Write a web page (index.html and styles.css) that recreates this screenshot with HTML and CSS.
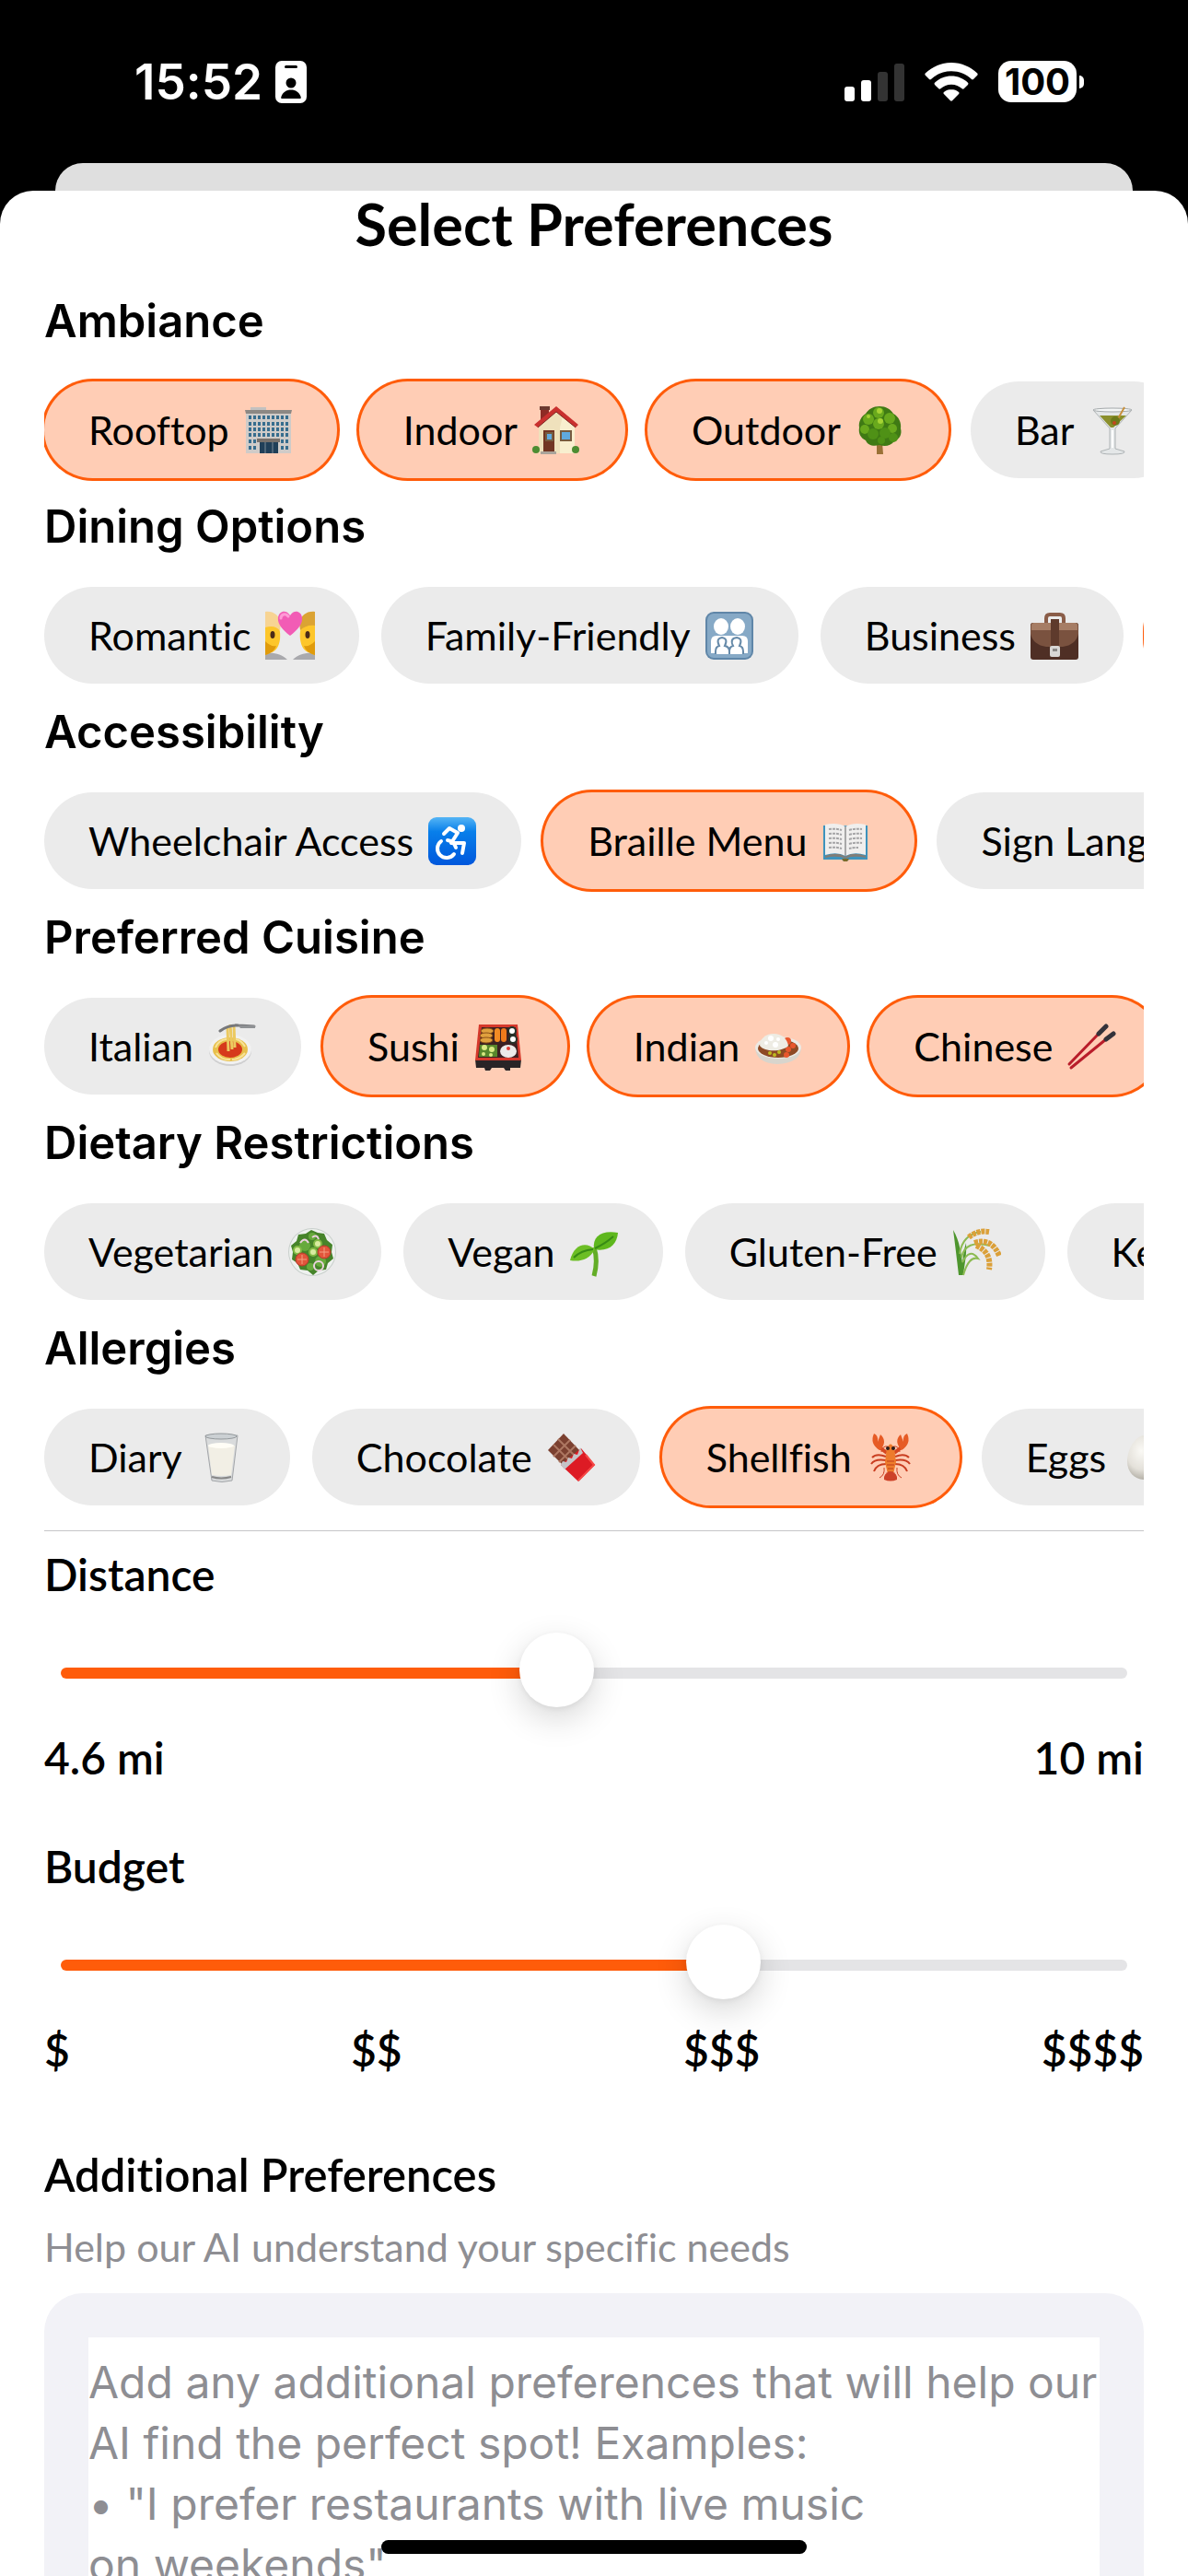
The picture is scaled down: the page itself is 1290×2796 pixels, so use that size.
FILE: index.html
```html
<!DOCTYPE html>
<html lang="en">
<head>
    <meta charset="UTF-8">
    <meta name="viewport" content="width=device-width, initial-scale=1.0">
    <title>Select Preferences</title>
    <link rel="stylesheet" href="styles.css">
</head>
<body>

<header class="status-bar">
    <div class="status-left">
        <span class="time">15:52</span>
        <svg class="badge-icon" width="34" height="46" viewBox="0 0 34 46">
            <rect width="34" height="46" rx="7" fill="#fff"/>
            <rect x="10" y="5" width="14" height="3" rx="1.5" fill="#000"/>
            <circle cx="17" cy="24" r="5.5" fill="#000"/>
            <path d="M7 41c-1 0-1-1-.6-2C8 34 12 31.500 17 31.500S26 34 27.600 39c.3 1 .3 2-.6 2z" fill="#000"/>
        </svg>
    </div>
    <div class="status-right">
        <svg width="65" height="42" viewBox="0 0 65 42">
            <rect x="0" y="26" width="11" height="16" rx="3" fill="#fff"/>
            <rect x="18" y="19" width="11" height="23" rx="3" fill="#fff"/>
            <rect x="36" y="10" width="11" height="32" rx="3" fill="#333"/>
            <rect x="54" y="1" width="11" height="41" rx="3" fill="#333"/>
        </svg>
        <svg width="58" height="42" viewBox="0 0 58 42">
            <g fill="#fff">
                <path d="M29 0C18 0 8 4.500.8 11.600c-.6.6-.6 1.500 0 2.100l4.200 4.300c.6.6 1.400.6 2 0C12.800 12.400 20.500 9.200 29 9.200s16.200 3.200 22 8.800c.6.6 1.400.6 2 0l4.200-4.300c.6-.6.6-1.500 0-2.100C50 4.500 40 0 29 0z"/>
                <path d="M29 14.600c-7 0-13.300 2.700-18 7.200-.6.6-.6 1.500 0 2.100l4.300 4.300c.6.6 1.400.6 2 .1 3.100-2.900 7.200-4.600 11.700-4.600s8.600 1.700 11.700 4.600c.6.5 1.400.5 2-.1l4.300-4.300c.6-.6.6-1.500 0-2.100-4.700-4.500-11-7.200-18-7.200z"/>
                <path d="M29 29c-3.100 0-5.900 1.100-8.100 3-.6.6-.6 1.400 0 2l7.100 7.300c.6.6 1.400.6 2 0l7.100-7.300c.6-.6.6-1.400 0-2-2.200-1.900-5-3-8.100-3z"/>
            </g>
        </svg>
        <div class="battery">
            <span class="battery-level">100</span>
            <span class="battery-tip"></span>
        </div>
    </div>
</header>

<div class="sheet-behind"></div>

<main class="sheet">
    <h1>Select Preferences</h1>

    <section class="group">
        <h2>Ambiance</h2>
        <div class="chips">
            <button class="chip selected" aria-pressed="true">Rooftop
                <svg class="emoji" viewBox="0 0 54 54">
                    <rect x="8" y="2" width="17" height="5" fill="#c3c1c0"/>
                    <rect x="3" y="6" width="49" height="46" fill="#cfcbc8"/>
                    <path d="M2 5h51l-1 4H3z" fill="#8c8884"/>
                    <g stroke="#376d8e" stroke-width="4">
                        <path stroke-dasharray="3 2" d="M6 13h44M6 20h44M6 26h44M6 32h44"/>
                        <path stroke-dasharray="3 2" d="M6 39h9M41 39h9M6 46h9M41 46h9"/>
                    </g>
                    <path d="M15 36h25v4H15z" fill="#77706b"/>
                    <path d="M18 40h20v12H18z" fill="#203f58"/>
                    <path d="M24 40v12M32 40v12" stroke="#7d8c98"/>
                </svg>
            </button>
            <button class="chip selected" aria-pressed="true">Indoor
                <svg class="emoji" viewBox="0 0 54 54">
                    <path d="M10 3h9v14h-9z" fill="#8e2b25"/>
                    <path d="M9 1h11v4H9z" fill="#6a3a30"/>
                    <path d="M8 23 27 5l20 18v29H8z" fill="#efe1bc"/>
                    <path d="M34 12 47 23v29H31V24z" fill="#f8efcf"/>
                    <path d="M3 21 27 1l24 20-3 3L27 7 7 24z" fill="#c9302f"/>
                    <path d="m7 24 20-17 21 17" fill="none" stroke="#7c2622"/>
                    <path d="M13 27h12v24H13z" fill="#723523"/>
                    <path d="M16 30h7v8h-7zM32 28h11v10H32z" fill="#5fa9df" stroke="#765b40" stroke-width="2"/>
                    <path d="M10 50h17v3H10z" fill="#aaa39a"/>
                    <g fill="#4d8c32"><circle cx="5" cy="48" r="4"/><circle cx="48" cy="48" r="4"/></g>
                </svg>
            </button>
            <button class="chip selected" aria-pressed="true">Outdoor
                <svg class="emoji" viewBox="0 0 54 54">
                    <path d="M24 40h6l1 13h-7z" fill="#9a7136"/>
                    <path d="M27 1c7 0 12 3 15 8 6 3 9 10 8 16 2 7-2 12-7 14-4 5-10 6-16 4-7 2-13 0-15-5-6-3-8-8-7-14-1-6 2-12 7-15 3-5 8-8 15-8z" fill="#3f7a14"/>
                    <g fill="#69a91d">
                        <circle cx="26" cy="8" r="6"/><circle cx="15" cy="15" r="6"/><circle cx="38" cy="14" r="6"/>
                        <circle cx="26" cy="20" r="6"/><circle cx="11" cy="26" r="5"/><circle cx="41" cy="25" r="5"/>
                    </g>
                    <g fill="#4f9116">
                        <circle cx="20" cy="31" r="6"/><circle cx="33" cy="30" r="6"/><circle cx="42" cy="35" r="5"/><circle cx="29" cy="38" r="4"/>
                    </g>
                    <g fill="#a5d334"><circle cx="27" cy="6" r="3"/><circle cx="28" cy="17" r="3"/><circle cx="15" cy="12" r="2"/></g>
                </svg>
            </button>
            <button class="chip" aria-pressed="false">Bar
                <svg class="emoji" viewBox="0 0 54 54">
                    <path d="M6 5h42L30 25v22l10 3q1 3-13 3t-13-3l10-3V25z" fill="#e4e7e8" stroke="#aeb3b5"/>
                    <path d="M13 11h29L28 24h-3z" fill="#8a8f2c"/>
                    <ellipse cx="27" cy="5" rx="21" ry="2" fill="#f4f6f6" stroke="#a4a9ab"/>
                    <path d="M40 2 31 18" stroke="#c8903c" stroke-width="2"/>
                    <circle cx="30" cy="17" r="5" fill="#6d7a1c"/>
                    <circle cx="29" cy="19" r="2" fill="#c4461f"/>
                    <path d="M27 27v19" stroke="#fff" stroke-width="2"/>
                </svg>
            </button>
        </div>
    </section>

    <section class="group">
        <h2>Dining Options</h2>
        <div class="chips">
            <button class="chip" aria-pressed="false">Romantic
                <svg class="emoji" viewBox="0 0 54 54">
                    <path d="M0 46c10-1 18 1 24 7H0zM54 46c-10-1-18 1-24 7h24z" fill="#a9a9ad"/>
                    <path d="M0 8h9c6 6 8 14 7 23-1 8-5 13-9 14L0 48zM54 8h-9c-6 6-8 14-7 23 1 8 5 13 9 14l7 3z" fill="#fdc62b"/>
                    <path d="M0 33c4 4 8 6 12 5-2 5-5 8-12 10zM54 33c-4 4-8 6-12 5 2 5 5 8 12 10z" fill="#e09b0c"/>
                    <path d="M0 1c9-1 15 4 17 12l-1 9c-3-5-9-6-16-4z" fill="#f7d493"/>
                    <path d="M54 1c-9-1-15 4-17 12l1 8c4-4 10-6 16-5z" fill="#dba333"/>
                    <ellipse cx="8" cy="26" rx="2.500" ry="4" fill="#4b2b18"/>
                    <ellipse cx="46" cy="26" rx="2.500" ry="4" fill="#4b2b18"/>
                    <path d="M27 27C18 20 13 14 14 7c1-7 9-9 13-2 4-7 12-5 13 2 1 7-4 13-13 20z" fill="#f25cb5"/>
                    <path d="M17 8c0-4 5-6 8-2" fill="none" stroke="#ff9ad6" stroke-width="3" stroke-linecap="round"/>
                </svg>
            </button>
            <button class="chip" aria-pressed="false">Family-Friendly
                <svg class="emoji" viewBox="0 0 54 54">
                    <rect x="1" y="1" width="52" height="52" rx="9" fill="#5f86a8"/>
                    <rect x="3" y="3" width="48" height="48" rx="7" fill="#86a9c6"/>
                    <g fill="#fff">
                        <ellipse cx="18" cy="17" rx="8" ry="9"/><ellipse cx="36" cy="17" rx="8" ry="9"/>
                        <path d="M7 46V33q0-6 6-6h28q6 0 6 6v13z"/>
                    </g>
                    <g fill="#fff" stroke="#668aa9" stroke-width="2">
                        <path d="M12 47v-3q0-5 4-6-4-8 3-9 7 1 3 9 5 1 5 6v3M27 47v-3q0-5 4-6-4-8 4-9 7 1 3 9 4 1 4 6v3"/>
                    </g>
                </svg>
            </button>
            <button class="chip" aria-pressed="false">Business
                <svg class="emoji" viewBox="0 0 54 54">
                    <path d="M18 15V8q0-4 4-4h11q4 0 4 4v7" fill="none" stroke="#8a5d48" stroke-width="4"/>
                    <rect x="1" y="13" width="52" height="40" rx="3" fill="#4f2f25"/>
                    <path d="M1 16q0-3 3-3h46q3 0 3 3v9q-3 12-17 14H18Q4 37 1 25z" fill="#7a523f"/>
                    <path d="M2 16q0-3 3-3h44q3 0 3 3v5H2z" fill="#a67d65"/>
                    <path d="M23 9h9v30h-9z" fill="#5e3a2c"/>
                    <rect x="22" y="38" width="11" height="12" rx="2" fill="#d9d7d5"/>
                    <path d="M25 41h5v3h-5z" fill="#8b8987"/>
                </svg>
            </button>
            <button class="chip selected" aria-pressed="true" aria-label="Casual"></button>
        </div>
    </section>

    <section class="group">
        <h2>Accessibility</h2>
        <div class="chips">
            <button class="chip" aria-pressed="false">Wheelchair Access
                <svg class="emoji" viewBox="0 0 54 54">
                    <defs>
                        <linearGradient id="blue" x1="0" y1="0" x2="0" y2="1">
                            <stop offset="0" stop-color="#55b5f5"/>
                            <stop offset=".3" stop-color="#087fea"/>
                            <stop offset="1" stop-color="#0057dc"/>
                        </linearGradient>
                    </defs>
                    <rect x="1" y="1" width="52" height="52" rx="9" fill="url(#blue)"/>
                    <circle cx="37" cy="13" r="4" fill="#fff"/>
                    <g fill="none" stroke="#fff" stroke-width="4" stroke-linecap="round" stroke-linejoin="round">
                        <path d="m18 19 6-6 9 5-7 11h14l-2 11M15 27a10 10 0 1 0 14 14"/>
                        <path d="M22 26q7 1 9 8"/>
                    </g>
                </svg>
            </button>
            <button class="chip selected" aria-pressed="true">Braille Menu
                <svg class="emoji" viewBox="0 0 54 54">
                    <path d="M3 10h48v37H31q-4 4-8 0H3z" fill="#3d93bd"/>
                    <path d="M5 43q14-5 22 1 8-6 22-1v2q-14-3-22 1-8-4-22-1z" fill="#807d77"/>
                    <path d="M5 9q13-3 22 2v32Q18 38 5 42zM49 9q-13-3-22 2v32q9-5 22-1z" fill="#f0efee"/>
                    <path d="M27 11v32" stroke="#a8a8a8" stroke-width="2"/>
                    <path d="M9 14q7-1 14 1M9 19q7-1 14 1M9 24q7-1 14 1M9 29q7-1 14 1M9 34q7-1 14 1M31 15q7-2 14-1M31 20q7-2 14-1M31 25q7-2 14-1M31 30q7-2 14-1M31 35q4-1 10-1" fill="none" stroke="#a4a4a6" stroke-width="2" stroke-dasharray="3 1"/>
                    <path d="M23 46h8l-2 3h-4z" fill="#7a6b29"/>
                </svg>
            </button>
            <button class="chip" aria-pressed="false">Sign Language</button>
        </div>
    </section>

    <section class="group">
        <h2>Preferred Cuisine</h2>
        <div class="chips">
            <button class="chip" aria-pressed="false">Italian
                <svg class="emoji" viewBox="0 0 54 54">
                    <ellipse cx="25" cy="32" rx="23" ry="16" fill="#cfcfd0"/>
                    <ellipse cx="25" cy="30" rx="23" ry="16" fill="#f1f1f1"/>
                    <ellipse cx="25" cy="30" rx="19" ry="13" fill="#e8c04c"/>
                    <path d="M9 28q3-8 12-9M10 34q6 8 15 7M41 27q-4-7-10-8M41 34q-6 7-14 7" fill="none" stroke="#f8e39a" stroke-width="2"/>
                    <ellipse cx="25" cy="30" rx="13" ry="9" fill="#d63a1b"/>
                    <path d="M23 32 22 6M27 30 25 3M30 28 29 5" fill="none" stroke="#ecc95f" stroke-width="3"/>
                    <path d="M14 10q9-7 20-6l17 1" fill="none" stroke="#77787b" stroke-width="3" stroke-linecap="round"/>
                    <path d="M34 4h18v3H36z" fill="#8f9194"/>
                </svg>
            </button>
            <button class="chip selected" aria-pressed="true">Sushi
                <svg class="emoji" viewBox="0 0 54 54">
                    <path d="M2 41h50l-1 9H40v3h-5l-2-3H20l-2 3h-5l-1-3H3z" fill="#292426"/>
                    <path d="M6 3h42l4 39H2z" fill="#d5382b"/>
                    <path d="M9 6h37l3 33H5z" fill="#3b2021"/>
                    <g fill="#e0a13e" stroke="#8d5119"><ellipse cx="15" cy="10" rx="7" ry="3"/><ellipse cx="14" cy="15" rx="7" ry="3"/><ellipse cx="14" cy="20" rx="7" ry="3"/></g>
                    <rect x="23" y="7" width="6" height="15" rx="3" fill="#f28b24"/>
                    <rect x="30" y="7" width="6" height="15" rx="3" fill="#ef7a1b"/>
                    <g fill="#fff" stroke="#253229" stroke-width="2"><circle cx="42" cy="10" r="4"/><circle cx="43" cy="19" r="4"/></g>
                    <path d="M7 25h19v13H6z" fill="#58862c"/>
                    <g fill="#d9e982"><circle cx="12" cy="28" r="3"/><circle cx="20" cy="30" r="3"/><circle cx="11" cy="35" r="2"/><circle cx="19" cy="36" r="2"/></g>
                    <ellipse cx="38" cy="32" rx="9" ry="7" fill="#ecebe9"/>
                    <circle cx="38" cy="29" r="2" fill="#df3b35"/>
                </svg>
            </button>
            <button class="chip selected" aria-pressed="true">Indian
                <svg class="emoji" viewBox="0 0 54 54">
                    <path d="M2 28q1 17 24 18 25-1 26-18z" fill="#d8d5cd"/>
                    <ellipse cx="27" cy="28" rx="25" ry="12" fill="#eceae5"/>
                    <ellipse cx="27" cy="29" rx="22" ry="10" fill="#8d4a25"/>
                    <g fill="#e8562c"><circle cx="37" cy="21" r="4"/><circle cx="43" cy="26" r="3"/><circle cx="38" cy="30" r="3"/><circle cx="36" cy="36" r="3"/></g>
                    <path d="M7 26c0-7 6-13 15-13s15 6 16 13c-5 6-25 8-31 0z" fill="#eeece4"/>
                    <g fill="#fff"><circle cx="19" cy="18" r="3"/><circle cx="27" cy="19" r="2"/><circle cx="14" cy="23" r="2"/><circle cx="24" cy="25" r="3"/></g>
                    <g fill="#bdbb21"><circle cx="18" cy="34" r="2"/><circle cx="23" cy="36" r="2"/><circle cx="28" cy="33" r="2"/></g>
                </svg>
            </button>
            <button class="chip selected" aria-pressed="true">Chinese
                <svg class="emoji" viewBox="0 0 54 54">
                    <g stroke-linecap="round">
                        <path d="M3 46 34 14M5 50l38-31" stroke="#b91d2a" stroke-width="3"/>
                        <path d="m35 13 8-8M43 19l8-6" stroke="#34323a" stroke-width="5"/>
                    </g>
                </svg>
            </button>
        </div>
    </section>

    <section class="group">
        <h2>Dietary Restrictions</h2>
        <div class="chips">
            <button class="chip" aria-pressed="false">Vegetarian
                <svg class="emoji" viewBox="0 0 54 54">
                    <circle cx="27" cy="27" r="26" fill="#c9d0cc"/>
                    <circle cx="27" cy="27" r="25" fill="#eef1ef"/>
                    <path d="M26 3l7 3 7 1 3 7 6 5-1 8 2 7-6 5-2 7-8 1-6 5-6-5-8-1-3-7-6-4 1-8-2-7 6-5 2-7 8-1z" fill="#46842a"/>
                    <g fill="#67aa3c"><circle cx="19" cy="20" r="6"/><circle cx="36" cy="37" r="6"/><circle cx="27" cy="10" r="4"/><circle cx="25" cy="43" r="4"/></g>
                    <g fill="#d9eca0" stroke="#82ba45" stroke-width="2"><circle cx="11" cy="25" r="4"/><circle cx="28" cy="27" r="4"/><circle cx="33" cy="18" r="4"/></g>
                    <g fill="#e2553b" stroke="#b9382c"><circle cx="16" cy="35" r="7"/><circle cx="40" cy="27" r="7"/></g>
                    <path d="M16 30v10M11 35h10M40 22v10M35 27h10" stroke="#f4a183"/>
                    <g fill="none" stroke="#ecd2df" stroke-width="2"><circle cx="34" cy="42" r="5"/><path d="M14 17q5-7 9 0M27 11q5-4 7 2"/></g>
                </svg>
            </button>
            <button class="chip" aria-pressed="false">Vegan
                <svg class="emoji" viewBox="0 0 54 54">
                    <path d="M27 53c3-11 3-22 0-31" fill="none" stroke="#63ad27" stroke-width="5"/>
                    <path d="M27 24C25 10 35 3 53 6c-1 13-10 21-26 18z" fill="#5eb71d"/>
                    <path d="M28 24C18 15 5 19 1 36c11 2 21-1 27-12z" fill="#6cbe25"/>
                    <path d="M28 23q11-5 20-13M26 24Q13 25 5 33" fill="none" stroke="#378b15" stroke-width="2"/>
                </svg>
            </button>
            <button class="chip" aria-pressed="false">Gluten-Free
                <svg class="emoji" viewBox="0 0 54 54">
                    <path d="M8 52C6 35 4 18 2 3c7 11 9 28 10 36 1-9 2-16 4-22 1 13-2 25-3 35z" fill="#4d952d"/>
                    <path d="M12 38q8-16 17-4-10-3-16 18M9 29Q12 8 32 5M11 33Q15 13 42 20" fill="none" stroke="#8dbb53" stroke-width="2"/>
                    <g fill="none" stroke="#dba039" stroke-width="6" stroke-dasharray="4 1">
                        <path d="M19 11q9-8 22-6M25 17q19-6 27 14M27 20q17 7 14 26"/>
                    </g>
                </svg>
            </button>
            <button class="chip" aria-pressed="false">Keto</button>
        </div>
    </section>

    <section class="group">
        <h2>Allergies</h2>
        <div class="chips">
            <button class="chip" aria-pressed="false">Diary
                <svg class="emoji" viewBox="0 0 54 54">
                    <path d="M10 3h35l-6 49q-11 3-22 0z" fill="#d9dbdc" stroke="#a3a6a9"/>
                    <path d="M13 14h29l-4 32q-10 2-21 0z" fill="#f2efe5"/>
                    <ellipse cx="27" cy="14" rx="14" ry="3" fill="#fffdf6"/>
                    <ellipse cx="27" cy="4" rx="17" ry="3" fill="#cbd0d3" stroke="#94999c"/>
                    <path d="M17 48q10 3 21 0" fill="none" stroke="#888" stroke-width="2"/>
                </svg>
            </button>
            <button class="chip" aria-pressed="false">Chocolate
                <svg class="emoji" viewBox="0 0 54 54">
                    <path d="M19 1 37 20 20 37 2 19z" fill="#7b4030"/>
                    <path d="m13 7 18 18M8 13l18 18M26 8 8 26M32 14 14 32" stroke="#ad7762" stroke-width="2"/>
                    <path d="m38 17 15 18-18 18-19-18z" fill="#dd1b24"/>
                    <path d="m37 16 3 6-20 18-4-5 2-4 4 1 2-5 4 1 2-5 4 1z" fill="#c5c4c7"/>
                    <path d="m43 24 9 11-17 17" fill="none" stroke="#f64a48" stroke-width="2"/>
                </svg>
            </button>
            <button class="chip selected" aria-pressed="true">Shellfish
                <svg class="emoji" viewBox="0 0 54 54">
                    <g fill="none" stroke="#c93d20" stroke-width="2">
                        <path d="M22 26q-10-4-15 1M22 30q-12-2-16 4M22 34q-10 0-13 8M32 26q10-4 15 1M32 30q12-2 16 4M32 34q10 0 13 8"/>
                        <path d="M24 15q-6-1-7 6M30 15q6-1 7 6M20 38q1 8-5 11M34 38q-1 8 5 11" stroke-width="1"/>
                    </g>
                    <path d="m14 15 9 7M40 15l-9 7" stroke="#d54821" stroke-width="4"/>
                    <path d="M15 19Q4 12 9 1q5 2 4 9l3-8q8 7 0 17zM39 19q11-7 6-18-5 2-4 9l-3-8q-8 7 1 17z" fill="#e65b25"/>
                    <path d="M23 17q4-9 8 0l2 15-3 13h-6l-3-13z" fill="#ed7b2c"/>
                    <path d="M23 31h8M23 35h8M24 39h6M24 43h6" stroke="#c03c1d"/>
                    <path d="M27 42q8 2 7 9-7 3-14 0-1-7 7-9z" fill="#cd4229"/>
                    <g fill="#2b1c1b"><circle cx="24" cy="17" r="2"/><circle cx="30" cy="17" r="2"/></g>
                </svg>
            </button>
            <button class="chip" aria-pressed="false">Eggs
                <svg class="emoji" viewBox="0 0 54 54">
                    <defs>
                        <radialGradient id="egg" cx=".4" cy=".35" r=".7">
                            <stop offset="0" stop-color="#faf9f5"/>
                            <stop offset=".6" stop-color="#e4e1da"/>
                            <stop offset="1" stop-color="#aaa69c"/>
                        </radialGradient>
                    </defs>
                    <path d="M27 3c10 0 19 15 19 28 0 12-8 20-19 20S8 43 8 31C8 18 17 3 27 3z" fill="url(#egg)"/>
                </svg>
            </button>
        </div>
    </section>

    <hr>

    <section class="slider">
        <label for="distance">Distance</label>
        <input type="range" id="distance" min="0" max="10" step="0.01" value="4.62" style="--fill: 46%">
        <div class="scale">
            <span id="distance-value">4.6 mi</span>
            <span>10 mi</span>
        </div>
    </section>

    <section class="slider">
        <label for="budget">Budget</label>
        <input type="range" id="budget" min="0" max="3" step="0.01" value="1.89" style="--fill: 63%">
        <div class="scale">
            <span>$</span>
            <span>$$</span>
            <span>$$$</span>
            <span>$$$$</span>
        </div>
    </section>

    <section class="additional">
        <label for="additional">Additional Preferences</label>
        <p>Help our AI understand your specific needs</p>
        <div class="text-box">
            <textarea id="additional" placeholder="Add any additional preferences that will help our AI find the perfect spot! Examples:&#10;• &quot;I prefer restaurants with live music&#10;on weekends&quot;"></textarea>
        </div>
    </section>
</main>

<div class="home-indicator"></div>

<script>
    // Toggle chips
    document.querySelectorAll('.chip').forEach((chip) => {
        chip.addEventListener('click', () => {
            const selected = chip.classList.toggle('selected');
            chip.setAttribute('aria-pressed', selected);
        });
    });

    // Keep the filled part of the track in step with the thumb
    document.querySelectorAll('input[type="range"]').forEach((input) => {
        input.addEventListener('input', () => {
            input.style.setProperty('--fill', (input.value / input.max) * 100 + '%');
            if (input.id === 'distance') {
                document.getElementById('distance-value').textContent = Number(input.value).toFixed(1) + ' mi';
            }
        });
    });
</script>

</body>
</html>
```
FILE: styles.css
```css
* {
    margin: 0;
    padding: 0;
    box-sizing: border-box;
}

body {
    display: flex;
    flex-direction: column;
    height: 100vh;
    overflow: hidden;
    background: #000;
    color: #000;
    font-family: Lato, sans-serif;
    font-variant-ligatures: none;
}

/* Status bar */
.status-bar {
    display: flex;
    flex-shrink: 0;
    justify-content: space-between;
    align-items: center;
    height: 177px;
    padding: 0 113px 0 146px;
    color: #fff;
    font-family: Inter, sans-serif;
}

.status-left,
.status-right {
    display: flex;
    align-items: center;
}

.status-left {
    gap: 14px;
}

.status-right {
    gap: 22px;
}

.time {
    font-size: 53px;
    font-weight: 600;
}

.battery {
    display: flex;
    align-items: center;
    gap: 3px;
}

.battery-level {
    width: 85px;
    height: 45px;
    border-radius: 14px;
    background: #fff;
    color: #000;
    font-size: 40px;
    font-weight: 700;
    line-height: 45px;
    text-align: center;
}

.battery-tip {
    width: 5px;
    height: 14px;
    border-radius: 0 5px 5px 0;
    background: #fff;
}

/* Sheet */
.sheet-behind {
    flex-shrink: 0;
    height: 30px;
    margin: 0 60px;
    border-radius: 30px 30px 0 0;
    background: #dfdfdf;
}

.sheet {
    flex: 1;
    min-height: 0;
    overflow: hidden;
    padding: 0 48px;
    border-radius: 36px 36px 0 0;
    background: #fff;
}

h1 {
    margin-bottom: 38px;
    font-size: 63px;
    font-weight: 700;
    line-height: 72px;
    text-align: center;
}

h2 {
    margin-bottom: 30px;
    font-family: Inter, sans-serif;
    font-size: 49px;
    font-weight: 600;
    line-height: 64px;
}

.group {
    margin-bottom: 18px;
}

.chips {
    display: flex;
    gap: 24px;
    padding: 3px 0;
    overflow: hidden;
}

.chip {
    display: flex;
    flex-shrink: 0;
    align-items: center;
    gap: 15px;
    height: 105px;
    padding: 0 48px;
    border: none;
    border-radius: 53px;
    background: #ebebeb;
    color: #000;
    font-family: Lato, sans-serif;
    font-size: 43px;
    font-variant-ligatures: none;
    white-space: nowrap;
    cursor: pointer;
}

.chip.selected {
    background: #ffcdb5;
    box-shadow: 0 0 0 3px #ff5c0a;
}

.emoji {
    flex-shrink: 0;
    width: 54px;
    height: 54px;
}

hr {
    height: 1px;
    margin: 24px 0 17px;
    border: none;
    background: #c6c6c8;
}

/* Sliders */
.slider {
    display: flex;
    flex-direction: column;
    margin-bottom: 58px;
    font-size: 48px;
    font-weight: 600;
    line-height: 60px;
}

input[type="range"] {
    height: 88px;
    margin: 33px 18px 18px;
    appearance: none;
    background: none;
}

input[type="range"]::-webkit-slider-runnable-track {
    height: 12px;
    border-radius: 6px;
    background: linear-gradient(to right, #ff5c0a var(--fill), #e4e4e6 var(--fill));
}

input[type="range"]::-webkit-slider-thumb {
    width: 81px;
    height: 81px;
    margin-top: -38px;
    appearance: none;
    border-radius: 50%;
    background: #fff;
    box-shadow: 0 12px 36px rgba(0, 0, 0, 0.16), 0 2px 6px rgba(0, 0, 0, 0.06);
}

.scale {
    display: flex;
    justify-content: space-between;
}

/* Additional preferences */
.additional {
    padding-top: 17px;
}

.additional label {
    display: block;
    font-size: 49px;
    font-weight: 600;
    line-height: 60px;
}

.additional p {
    margin: 22px 0 23px;
    color: #8e8e93;
    font-size: 43px;
    line-height: 54px;
}

.text-box {
    padding: 48px;
    border-radius: 42px;
    background: #f2f2f7;
}

textarea {
    display: block;
    width: 100%;
    height: 480px;
    padding: 16px 0;
    border: none;
    outline: none;
    resize: none;
    background: #fff;
    font-family: Inter, sans-serif;
    font-size: 48px;
    line-height: 66px;
}

textarea::placeholder {
    color: #8e8e93;
}

.home-indicator {
    position: fixed;
    bottom: 24px;
    left: 50%;
    width: 462px;
    height: 15px;
    border-radius: 8px;
    background: #000;
    transform: translateX(-50%);
}
```
